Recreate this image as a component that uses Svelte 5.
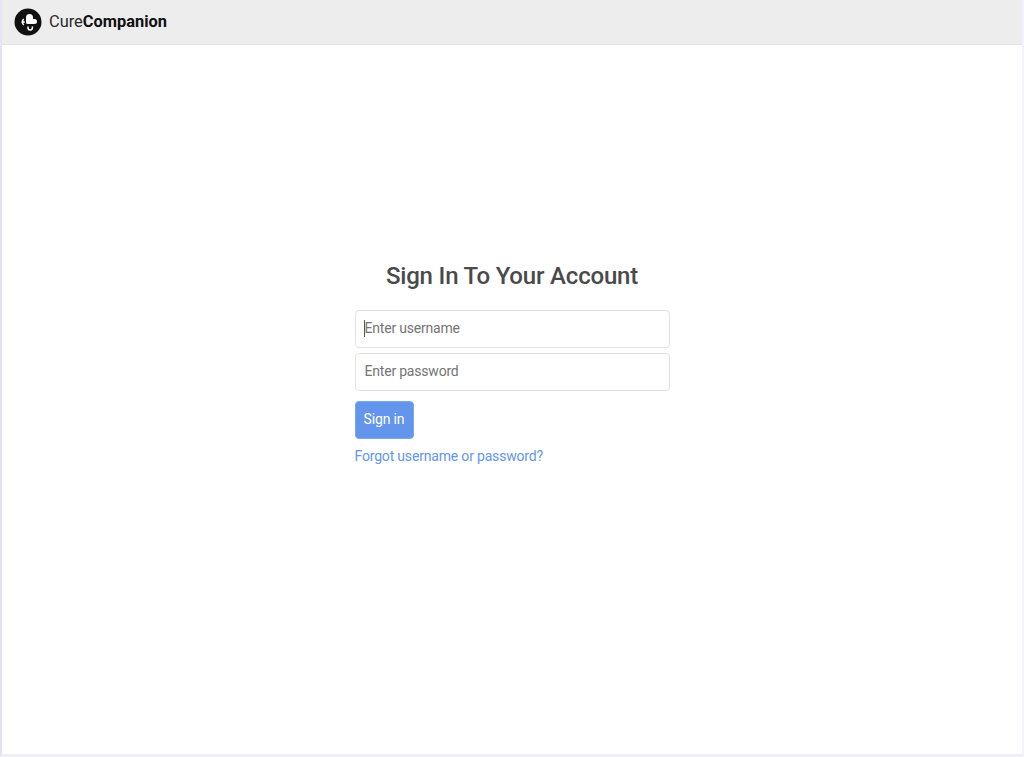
<script>
  let username = $state('')
  let password = $state('')
</script>

<div class="page">
  <nav class="navbar">
    <a class="brand" href="#top">
      <svg class="logo" viewBox="0 0 28 28" width="28" height="28" aria-hidden="true">
        <circle cx="14" cy="14" r="13.5" fill="#111" />
        <path d="M12 9.500a3.500 3.500 0 0 1 7 0V11h1.500a2.500 2.500 0 0 1 0 5h-7a1.500 1.500 0 0 1-1.500-1.500z" fill="#fff" />
        <path d="M10 11.300a2.900 2.900 0 0 0 0 5.400" fill="none" stroke="#fff" stroke-width="1.500" />
        <circle cx="9.800" cy="14" r="1" fill="#fff" />
        <path d="M14 18.500v1.300a2.200 2.200 0 0 0 4.400 0v-1.300" fill="none" stroke="#fff" stroke-width="1.500" />
      </svg>
      <span class="brand-name">Cure<b>Companion</b></span>
    </a>
  </nav>

  <main class="content">
    <h1>Sign In To Your Account</h1>
    <form onsubmit={(e) => e.preventDefault()}>
      <div class="field">
        <input type="text" placeholder="Enter username" bind:value={username} />
        <span class="caret"></span>
      </div>
      <input type="password" placeholder="Enter password" bind:value={password} />
      <button type="submit">Sign in</button>
      <a class="forgot" href="#top">Forgot username or password?</a>
    </form>
  </main>
</div>

<style>
  :global(body) { background: #fff; }

  .page {
    box-sizing: border-box; height: 757px; overflow: hidden;
    display: flex; flex-direction: column;
    border-left: 2px solid #e6e4f2; border-right: 2px solid #f4f3fa; border-bottom: 3px solid #f0eff8;
    font-family: Roboto, "Liberation Sans", sans-serif;
  }

  .navbar {
    height: 45px; box-sizing: border-box; flex: none;
    display: flex; align-items: center; padding: 0 12px;
    background: #ededed; border-bottom: 1px solid #e3e3e3;
  }
  .brand { display: flex; align-items: center; gap: 7px; color: #2b2b2b; text-decoration: none; font-size: 16.4px; }
  .brand-name { padding-bottom: 1px; }
  .brand b { font-weight: 700; color: #111; }

  .content { width: 315px; margin: 0 auto; padding-top: 216px; }

  h1 {
    margin: 0 0 19px; text-align: center;
    font-size: 24px; line-height: 30px; font-weight: 500; color: #4a4a4a; letter-spacing: -0.18px;
  }

  form { display: flex; flex-direction: column; align-items: flex-start; }

  .field { position: relative; width: 100%; }
  .caret { position: absolute; left: 9px; top: 10px; width: 1px; height: 17px; background: #555; }

  input {
    box-sizing: border-box; width: 100%; height: 38px; padding: 0 9px 2px; margin-bottom: 5px;
    border: 1px solid #e2e2e2; border-radius: 4px; outline: none; background: #fff;
    font-family: inherit; font-size: 14px; letter-spacing: -0.2px; color: #495057;
  }
  input::placeholder { color: #757575; opacity: 1; }

  button {
    box-sizing: border-box; width: 59px; height: 38px; margin-top: 5px; padding: 0 0 2px;
    background: #6495ed; border: 1px solid #7ba6f0; border-radius: 4px;
    color: #fff; font-family: inherit; font-size: 14px; letter-spacing: -0.15px; cursor: pointer;
  }

  .forgot { margin-top: 9px; color: #6495ed; font-size: 14px; letter-spacing: -0.18px; line-height: 17px; text-decoration: none; }
</style>
